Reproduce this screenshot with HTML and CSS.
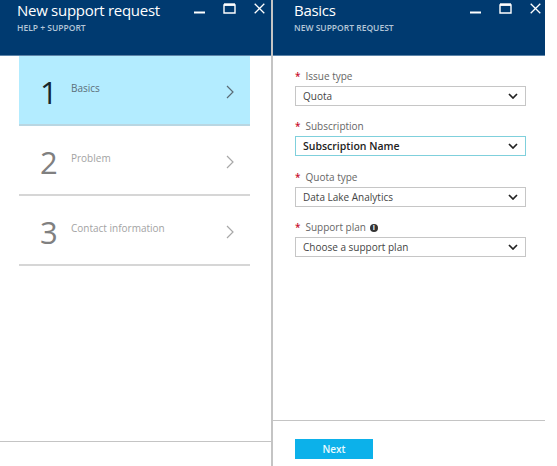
FILE: index.html
```html
<!DOCTYPE html>
<html lang="en">

<head>
    <meta charset="UTF-8">
    <meta name="viewport" content="width=device-width, initial-scale=1.0">
    <title>New support request</title>
    <link rel="stylesheet" href="styles.css">
</head>

<body>
    <div class="page">
        <section class="blade blade-left">
            <header class="blade-head">
                <div class="head-text">
                    <h1>New support request</h1>
                    <p>HELP + SUPPORT</p>
                </div>
                <div class="win-btns">
                    <svg width="11" height="11" viewBox="0 0 11 11"><path d="M0 9.500h11" stroke="#fff" stroke-width="2"/></svg>
                    <svg width="13" height="11" viewBox="0 0 13 11"><path d="M1 2h11v8H1z" fill="none" stroke="#fff" stroke-width="1.400"/><path d="M1 1.500h11" stroke="#fff" stroke-width="2.400"/></svg>
                    <svg width="11" height="11" viewBox="0 0 11 11"><path d="M.7.7l9.600 9.600M10.300.7L.7 10.300" stroke="#fff" stroke-width="1.300"/></svg>
                </div>
            </header>
            <div class="steps">
                <div class="step step-active">
                    <span class="step-num">1</span>
                    <span class="step-name">Basics</span>
                    <svg class="step-arrow" width="8" height="14" viewBox="0 0 8 14"><path d="M1 1l6 6-6 6" fill="none" stroke="#5a6b75" stroke-width="1.200"/></svg>
                </div>
                <div class="step">
                    <span class="step-num">2</span>
                    <span class="step-name">Problem</span>
                    <svg class="step-arrow" width="8" height="14" viewBox="0 0 8 14"><path d="M1 1l6 6-6 6" fill="none" stroke="#a8a8a8" stroke-width="1.200"/></svg>
                </div>
                <div class="step">
                    <span class="step-num">3</span>
                    <span class="step-name">Contact information</span>
                    <svg class="step-arrow" width="8" height="14" viewBox="0 0 8 14"><path d="M1 1l6 6-6 6" fill="none" stroke="#a8a8a8" stroke-width="1.200"/></svg>
                </div>
            </div>
            <div class="blade-foot blade-foot-left"></div>
        </section>

        <section class="blade blade-right">
            <header class="blade-head">
                <div class="head-text">
                    <h1>Basics</h1>
                    <p>NEW SUPPORT REQUEST</p>
                </div>
                <div class="win-btns">
                    <svg width="11" height="11" viewBox="0 0 11 11"><path d="M0 9.500h11" stroke="#fff" stroke-width="2"/></svg>
                    <svg width="13" height="11" viewBox="0 0 13 11"><path d="M1 2h11v8H1z" fill="none" stroke="#fff" stroke-width="1.400"/><path d="M1 1.500h11" stroke="#fff" stroke-width="2.400"/></svg>
                    <svg width="11" height="11" viewBox="0 0 11 11"><path d="M.7.7l9.600 9.600M10.300.7L.7 10.300" stroke="#fff" stroke-width="1.300"/></svg>
                </div>
            </header>
            <form class="fields">
                <div class="field">
                    <label><span class="req">*</span>Issue type</label>
                    <div class="dropdown"><span>Quota</span>
                        <svg width="10" height="6" viewBox="0 0 10 6"><path d="M1 1l4 4 4-4" fill="none" stroke="#222" stroke-width="1.700"/></svg>
                    </div>
                </div>
                <div class="field">
                    <label><span class="req">*</span>Subscription</label>
                    <div class="dropdown dropdown-focus"><span>Subscription Name</span>
                        <svg width="10" height="6" viewBox="0 0 10 6"><path d="M1 1l4 4 4-4" fill="none" stroke="#222" stroke-width="1.700"/></svg>
                    </div>
                </div>
                <div class="field">
                    <label><span class="req">*</span>Quota type</label>
                    <div class="dropdown"><span>Data Lake Analytics</span>
                        <svg width="10" height="6" viewBox="0 0 10 6"><path d="M1 1l4 4 4-4" fill="none" stroke="#222" stroke-width="1.700"/></svg>
                    </div>
                </div>
                <div class="field">
                    <label><span class="req">*</span>Support plan<i class="info">i</i></label>
                    <div class="dropdown"><span>Choose a support plan</span>
                        <svg width="10" height="6" viewBox="0 0 10 6"><path d="M1 1l4 4 4-4" fill="none" stroke="#222" stroke-width="1.700"/></svg>
                    </div>
                </div>
            </form>
            <div class="blade-foot">
                <button class="next-btn" type="button">Next</button>
            </div>
        </section>
    </div>
</body>

</html>
```

FILE: styles.css
```css
body {
    font-family: "Open Sans", "Noto Sans", sans-serif;
    margin: 0;
    background: #fff;
}

.page {
    display: flex;
    width: 545px;
    height: 466px;
    overflow: hidden;
}

.blade {
    display: flex;
    flex-direction: column;
}

.blade-left {
    width: 271px;
    border-right: 2px solid #c4c4c4;
}

.blade-right {
    width: 272px;
}

.blade-head {
    display: flex;
    justify-content: space-between;
    height: 56px;
    flex: none;
    box-sizing: border-box;
    background: #003a70;
    border-bottom: 1px solid #5d84a8;
    color: #fff;
    padding: 0 6px 0 17px;
}

.blade-right .blade-head {
    padding: 0 4px 0 21px;
}

.head-text h1 {
    margin: 0;
    font-size: 15px;
    font-weight: 400;
    letter-spacing: -0.28px;
    line-height: 20px;
}

.head-text p {
    margin: 3px 0 0;
    font-size: 8.5px;
    font-weight: 600;
    line-height: 10px;
    color: #b4c6d8;
}

.win-btns {
    display: flex;
    gap: 18px;
    padding-top: 3px;
    height: 12px;
    align-items: flex-start;
}

.steps {
    padding: 0 21px 0 19px;
}

.step {
    display: flex;
    height: 70px;
    box-sizing: border-box;
    border-bottom: 2px solid #d6d6d6;
    padding-left: 21px;
    color: #a3a3a3;
}

.step-active {
    background: #b3ecff;
    border-bottom-color: #b9d6e2;
    color: #5c6f7a;
}

.step-num {
    width: 31px;
    font-size: 31px;
    line-height: 40px;
    padding-top: 16px;
    color: #808080;
}

.step-active .step-num {
    color: #16262e;
}

.step-name {
    flex: 1;
    font-size: 10px;
    line-height: 14px;
    padding-top: 25px;
}

.step-arrow {
    margin: 29px 16px 0 0;
}

.fields {
    flex: 1;
    padding: 13px 19px 0 22px;
}

.field {
    margin-bottom: 13.4px;
}

.field label {
    display: block;
    height: 17px;
    font-size: 10px;
    line-height: 14px;
    color: #666;
}

.req {
    color: #c8102e;
    font-weight: 600;
    margin-right: 5px;
}

.info {
    display: inline-block;
    width: 8px;
    height: 8px;
    margin-left: 4px;
    border-radius: 50%;
    background: #333;
    color: #fff;
    font-size: 7px;
    font-style: normal;
    font-weight: 700;
    line-height: 8px;
    text-align: center;
    vertical-align: 1px;
}

.dropdown {
    display: flex;
    justify-content: space-between;
    align-items: center;
    height: 20px;
    box-sizing: border-box;
    border: 1px solid #c6c6c6;
    padding: 0 7px;
    font-size: 10px;
    color: #444;
}

.dropdown-focus {
    border-color: #7fd0dc;
    font-weight: 600;
    font-size: 10.5px;
    color: #222;
}

.blade-foot {
    flex: none;
    height: 46px;
    box-sizing: border-box;
    border-top: 1px solid #c4c4c4;
    padding: 18px 0 0 22px;
}

.blade-foot-left {
    margin-top: auto;
    height: 25px;
    padding: 0;
}

.next-btn {
    display: block;
    width: 78px;
    height: 20px;
    padding: 0;
    border: 0;
    background: #0cb1ea;
    color: #e8fbff;
    font-family: inherit;
    font-size: 10px;
    font-weight: 600;
}
```
